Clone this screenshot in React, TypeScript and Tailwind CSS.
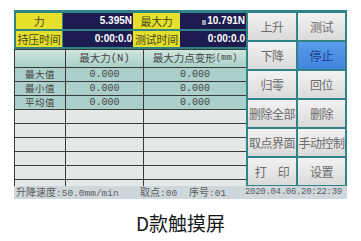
const cjk = "font-['Noto_Sans_CJK_SC',sans-serif]";
const mono = "font-['Liberation_Mono','Noto_Sans_CJK_SC',monospace]";

const Label: React.FC<{ text: string; w: string }> = ({ text, w }) => (
  <div
    className={`${w} h-full bg-[#e4e02c] text-[#4a4820] text-[11px] leading-none whitespace-nowrap tracking-[-0.3px] flex items-center justify-center`}
  >
    {text}
  </div>
);

const Value: React.FC<{ children: React.ReactNode; w: string }> = ({ children, w }) => (
  <div
    className={`${w} h-full bg-[#1d1b4f] text-white text-[10px] font-bold leading-none flex items-center justify-end pr-[1px] font-['Liberation_Sans',sans-serif]`}
  >
    {children}
  </div>
);

const buttons = [
  '上升', '测试',
  '下降', '停止',
  '归零', '回位',
  '删除全部', '删除',
  '取点界面', '手动控制',
  '打\u3000印', '设置',
];

const dataRows = [
  ['最大值', '0.000', '0.000'],
  ['最小值', '0.000', '0.000'],
  ['平均值', '0.000', '0.000'],
  ['', '', ''],
  ['', '', ''],
  ['', '', ''],
  ['', '', ''],
  ['', '', ''],
  ['', '', ''],
];

const App: React.FC = () => {
  return (
    <div className={`w-[361px] h-[241px] bg-white pl-[14px] pt-[10px] overflow-hidden ${cjk}`}>
      {/* 屏幕 */}
      <div className="w-[333px] h-[189px] flex flex-col bg-[#2f8585]">
        <div className="flex h-[176px]">
          {/* 左侧: 数值 + 表格 */}
          <div className="w-[232px] flex flex-col pt-[3px]">
            <div className="flex flex-col gap-[2px] pl-[2px]">
              <div className="flex h-[16px]">
                <Label text="力" w="w-[46px] mr-[1px]" />
                <Value w="w-[70px]">5.395N</Value>
                <Label text="最大力" w="w-[47px]" />
                <Value w="w-[66px]">
                  <span className="w-[4px] h-[5px] bg-[#9a9aa8] mr-[1px] mt-[2px]" />
                  10.791N
                </Value>
              </div>
              <div className="flex h-[16px]">
                <Label text="持压时间" w="w-[46px] mr-[1px]" />
                <Value w="w-[70px]">0:00:0.0</Value>
                <Label text="测试时间" w="w-[47px]" />
                <Value w="w-[66px]">0:00:0.0</Value>
              </div>
            </div>
            {/* 表格 */}
            <div className="mt-[2px] h-[137px] overflow-hidden bg-[#3a3a3a] flex flex-col gap-[1px] pt-[1px] text-[#454545]">
              <div className="flex h-[17px] shrink-0 gap-[1px] pl-[1px]">
                <div className="w-[50px] bg-gradient-to-b from-[#cfe6df] to-[#a9d0c8]" />
                <div className="w-[77px] bg-gradient-to-b from-[#cfe6df] to-[#a9d0c8] flex items-center justify-center text-[10.5px] leading-none">
                  最大力<span className={mono}>(N)</span>
                </div>
                <div className="w-[102px] bg-gradient-to-b from-[#cfe6df] to-[#a9d0c8] flex items-center justify-center text-[10.5px] leading-none">
                  最大力点变形<span className={`${mono} text-[9px]`}>(mm)</span>
                </div>
              </div>
              {dataRows.map((r, i) => {
                const bg = r[0] ? 'bg-[#abcfca]' : 'bg-[#e5e8e8]';
                return (
                  <div key={i} className="flex h-[13px] shrink-0 gap-[1px] pl-[1px]">
                    <div className={`w-[50px] ${bg} flex items-center justify-center text-[9.5px] tracking-[0.5px] leading-none`}>
                      {r[0]}
                    </div>
                    <div className={`w-[77px] ${bg} flex items-center justify-center text-[10px] leading-none ${mono}`}>
                      {r[1]}
                    </div>
                    <div className={`w-[102px] ${bg} flex items-center justify-center text-[10px] leading-none ${mono}`}>
                      {r[2]}
                    </div>
                  </div>
                );
              })}
            </div>
          </div>
          {/* 右侧按钮 */}
          <div className="w-[101px] grid grid-cols-[48px_47px] grid-rows-6 gap-[2px] pl-[2px] pt-[3px] pb-[1px]">
            {buttons.map((b) =>
              b === '停止' ? (
                <div
                  key={b}
                  className="bg-gradient-to-b from-[#5a9cec] to-[#3f84dc] text-[#1b3f8c] text-[12px] flex items-center justify-center"
                >
                  {b}
                </div>
              ) : (
                <div
                  key={b}
                  className="bg-gradient-to-b from-[#f2f2f2] to-[#dadada] text-[#6b6b6b] text-[12px] flex items-center justify-center whitespace-pre tracking-[-0.5px]"
                >
                  {b}
                </div>
              ),
            )}
          </div>
        </div>
        {/* 状态栏 */}
        <div className="h-[13px] bg-[#cdd7dc] flex items-center text-[#5e5e5e] text-[10px] leading-none pl-[2px]">
          <span className="w-[124px]">
            升降速度<span className={`${mono} text-[9.5px]`}>:50.0mm/min</span>
          </span>
          <span className="w-[49px]">
            取点<span className={`${mono} text-[9.5px]`}>:00</span>
          </span>
          <span className="w-[56px]">
            序号<span className={`${mono} text-[9.5px]`}>:01</span>
          </span>
          <span className={`${mono} text-[9px] tracking-[-0.3px]`}>2020.04.06.20:22:39</span>
        </div>
      </div>
      {/* 标题 */}
      <div className="w-[333px] mt-[14px] text-center text-[19px] leading-none text-[#151515]">
        D款触摸屏
      </div>
    </div>
  );
};

export default App;
